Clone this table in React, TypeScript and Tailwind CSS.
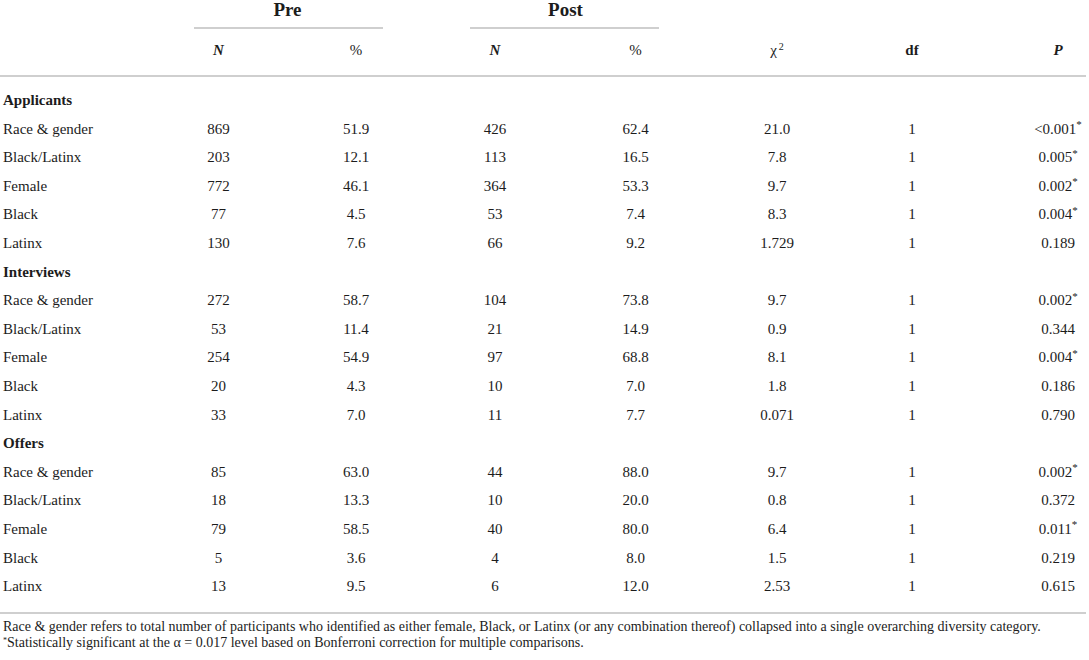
import React from "react";

type Row = [string, string, string, string, string, string, string, string, boolean];

const sections: { title: string; rows: Row[] }[] = [
  {
    title: "Applicants",
    rows: [
      ["Race & gender", "869", "51.9", "426", "62.4", "21.0", "1", "<0.001", true],
      ["Black/Latinx", "203", "12.1", "113", "16.5", "7.8", "1", "0.005", true],
      ["Female", "772", "46.1", "364", "53.3", "9.7", "1", "0.002", true],
      ["Black", "77", "4.5", "53", "7.4", "8.3", "1", "0.004", true],
      ["Latinx", "130", "7.6", "66", "9.2", "1.729", "1", "0.189", false],
    ],
  },
  {
    title: "Interviews",
    rows: [
      ["Race & gender", "272", "58.7", "104", "73.8", "9.7", "1", "0.002", true],
      ["Black/Latinx", "53", "11.4", "21", "14.9", "0.9", "1", "0.344", false],
      ["Female", "254", "54.9", "97", "68.8", "8.1", "1", "0.004", true],
      ["Black", "20", "4.3", "10", "7.0", "1.8", "1", "0.186", false],
      ["Latinx", "33", "7.0", "11", "7.7", "0.071", "1", "0.790", false],
    ],
  },
  {
    title: "Offers",
    rows: [
      ["Race & gender", "85", "63.0", "44", "88.0", "9.7", "1", "0.002", true],
      ["Black/Latinx", "18", "13.3", "10", "20.0", "0.8", "1", "0.372", false],
      ["Female", "79", "58.5", "40", "80.0", "6.4", "1", "0.011", true],
      ["Black", "5", "3.6", "4", "8.0", "1.5", "1", "0.219", false],
      ["Latinx", "13", "9.5", "6", "12.0", "2.53", "1", "0.615", false],
    ],
  },
];

const grid = "grid grid-cols-[150px_137px_138px_140px_141px_142px_128px_110px]";

export default function App() {
  return (
    <div
      className="w-[1089px] h-[660px] bg-white text-[#1c1c1c] overflow-hidden"
      style={{ fontFamily: '"Liberation Serif", "Times New Roman", serif' }}
    >
      <div className="w-[1086px]">
        {/* group header */}
        <div className={grid}>
          <div />
          <div className="col-span-2">
            <div className="h-[20px] leading-[20px] text-[19px] font-bold text-center">Pre</div>
            <div className="mt-[7px] ml-[44px] mr-[42px] h-[2px] bg-[#cfcfcf]" />
          </div>
          <div className="col-span-2">
            <div className="h-[20px] leading-[20px] text-[19px] font-bold text-center">Post</div>
            <div className="mt-[7px] ml-[45px] mr-[47px] h-[2px] bg-[#cfcfcf]" />
          </div>
          <div />
          <div />
          <div />
        </div>
        {/* column header */}
        <div className={`${grid} h-[46px] pt-[11px] text-[15px] leading-[20px] font-bold`}>
          <div />
          <div className="text-center italic">N</div>
          <div className="text-center font-normal">%</div>
          <div className="text-center italic">N</div>
          <div className="text-center font-normal">%</div>
          <div className="text-center font-normal">
            χ<sup className="text-[10px] ml-[2px]">2</sup>
          </div>
          <div className="text-center">df</div>
          <div className="text-center italic pl-[54px]">P</div>
        </div>
        <div className="h-[2px] bg-[#cfcfcf]" />
        {/* body */}
        <div className="pt-[9px] text-[15px]">
          {sections.map((s) => (
            <React.Fragment key={s.title}>
              <div className="h-[28.6px] flex items-center font-bold pl-[3px]">{s.title}</div>
              {s.rows.map((r, i) => (
                <div key={i} className={`${grid} h-[28.6px] items-center`}>
                  <div className="pl-[3px]">{r[0]}</div>
                  <div className="text-center">{r[1]}</div>
                  <div className="text-center">{r[2]}</div>
                  <div className="text-center">{r[3]}</div>
                  <div className="text-center">{r[4]}</div>
                  <div className="text-center">{r[5]}</div>
                  <div className="text-center">{r[6]}</div>
                  <div className="text-center pl-[54px]">
                    {r[7]}
                    {r[8] && <sup className="text-[11px]">*</sup>}
                  </div>
                </div>
              ))}
            </React.Fragment>
          ))}
        </div>
        <div className="mt-[11px] h-[2px] bg-[#cfcfcf]" />
        <div className="pt-[5px] pl-[3px] text-[14px] leading-[16px]">
          <div>
            Race &amp; gender refers to total number of participants who identified as either female, Black, or Latinx (or any combination thereof) collapsed into a single overarching diversity category.
          </div>
          <div>
            <sup className="text-[8px]">*</sup>Statistically significant at the α = 0.017 level based on Bonferroni correction for multiple comparisons.
          </div>
        </div>
      </div>
    </div>
  );
}
